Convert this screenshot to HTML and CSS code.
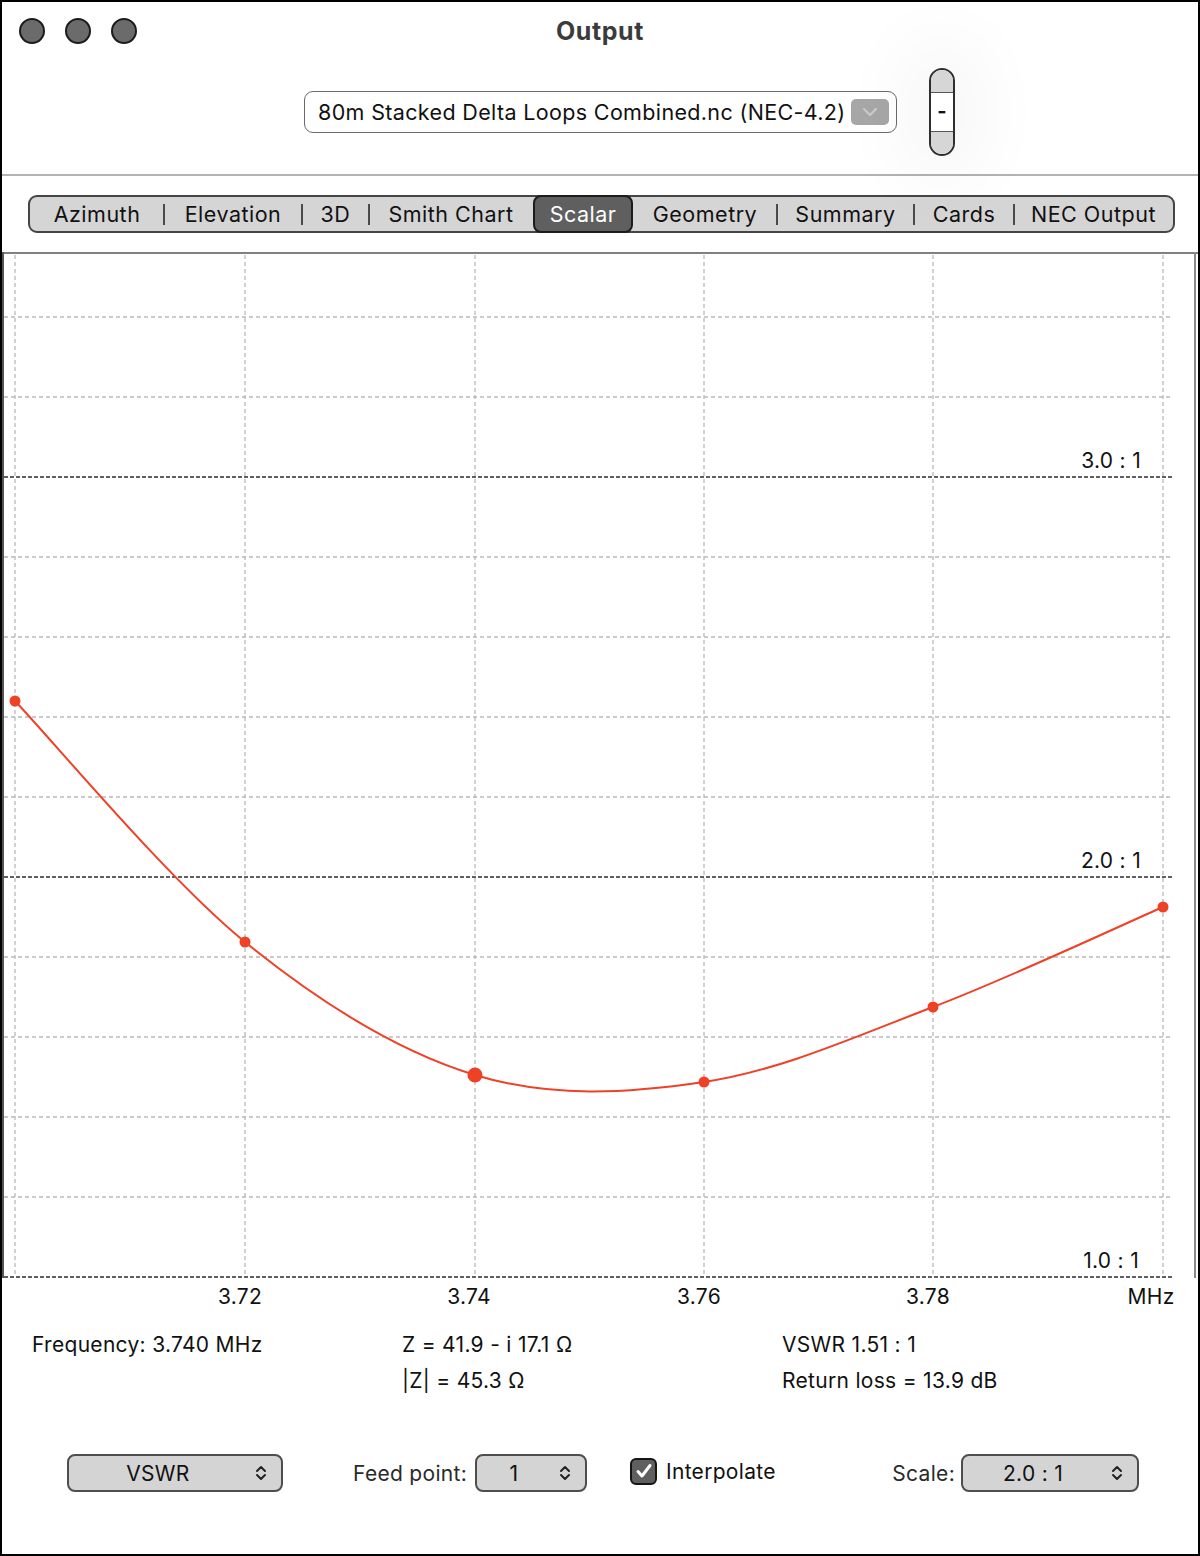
FILE: index.html
```html
<!DOCTYPE html>
<html lang="en">

<head>
    <meta charset="UTF-8">
    <meta name="viewport" content="width=device-width, initial-scale=1.0">
    <title>Output</title>
    <link rel="stylesheet" href="styles.css">
</head>

<body>
    <div class="window">
        <div class="titlebar">
            <div class="lights">
                <span class="light"></span>
                <span class="light"></span>
                <span class="light"></span>
            </div>
            <div class="title">Output</div>
            <div></div>
        </div>

        <div class="toolbar">
            <div></div>
            <div class="filepopup">
                <span class="filename">80m Stacked Delta Loops Combined.nc (NEC-4.2)</span>
                <span class="filearrow">
                    <svg width="18" height="10" viewBox="0 0 18 10"><path d="M3 2 L9 8 L15 2" fill="none" stroke="#c9c9c9" stroke-width="2.4" stroke-linecap="round" stroke-linejoin="round"/></svg>
                </span>
            </div>
            <div class="stepwrap">
                <div class="stepper">
                    <div class="step-top"></div>
                    <div class="step-mid">-</div>
                    <div class="step-bot"></div>
                </div>
            </div>
        </div>

        <div class="tabs">
            <div class="seg w1">Azimuth</div>
            <div class="seg w2">Elevation</div>
            <div class="seg w3">3D</div>
            <div class="seg w4">Smith Chart</div>
            <div class="seg w5 selected">Scalar</div>
            <div class="seg w6 after">Geometry</div>
            <div class="seg w7">Summary</div>
            <div class="seg w8">Cards</div>
            <div class="seg w9">NEC Output</div>
        </div>

        <svg class="chart" width="1196" height="1060" viewBox="2 252 1196 1060">
            <!-- minor grid -->
            <g stroke="#b9b9b9" stroke-width="1.3" stroke-dasharray="4 3" fill="none">
                <line x1="15" y1="255" x2="15" y2="1277"/>
                <line x1="245" y1="255" x2="245" y2="1277"/>
                <line x1="475" y1="255" x2="475" y2="1277"/>
                <line x1="704" y1="255" x2="704" y2="1277"/>
                <line x1="933" y1="255" x2="933" y2="1277"/>
                <line x1="1163" y1="255" x2="1163" y2="1277"/>
                <line x1="4" y1="317" x2="1172" y2="317"/>
                <line x1="4" y1="397" x2="1172" y2="397"/>
                <line x1="4" y1="557" x2="1172" y2="557"/>
                <line x1="4" y1="637" x2="1172" y2="637"/>
                <line x1="4" y1="717" x2="1172" y2="717"/>
                <line x1="4" y1="797" x2="1172" y2="797"/>
                <line x1="4" y1="957" x2="1172" y2="957"/>
                <line x1="4" y1="1037" x2="1172" y2="1037"/>
                <line x1="4" y1="1117" x2="1172" y2="1117"/>
                <line x1="4" y1="1197" x2="1172" y2="1197"/>
            </g>
            <!-- ratio lines -->
            <g stroke="#2c2c2c" stroke-width="1.4" stroke-dasharray="4 2" fill="none">
                <line x1="4" y1="477" x2="1172" y2="477"/>
                <line x1="4" y1="877" x2="1172" y2="877"/>
                <line x1="4" y1="1277" x2="1172" y2="1277"/>
            </g>
            <!-- frame -->
            <line x1="2" y1="253" x2="1198" y2="253" stroke="#808080" stroke-width="2"/>
            <line x1="3" y1="252" x2="3" y2="1278" stroke="#555" stroke-width="2"/>
            <line x1="1195" y1="252" x2="1195" y2="1278" stroke="#8a8a8a" stroke-width="2"/>

            <g class="ratio" text-anchor="end">
                <text x="1141" y="468">3.0 : 1</text>
                <text x="1141" y="868">2.0 : 1</text>
                <text x="1139" y="1268">1.0 : 1</text>
            </g>

            <path d="M15 701 C53.3 741.2 168.3 879.7 245 942 C321.7 1004.3 398.5 1051.7 475 1075 C551.5 1098.3 627.7 1093.3 704 1082 C780.3 1070.7 856.5 1036.2 933 1007 C1009.5 977.8 1124.7 923.7 1163 907" fill="none" stroke="#ee4126" stroke-width="2"/>
            <g fill="#ee4126">
                <circle cx="15" cy="701" r="5.5"/>
                <circle cx="245" cy="942" r="5.5"/>
                <circle cx="475" cy="1075" r="7.5"/>
                <circle cx="704" cy="1082" r="5.5"/>
                <circle cx="933" cy="1007" r="5.5"/>
                <circle cx="1163" cy="907" r="5.5"/>
            </g>

            <g class="axis" text-anchor="middle">
                <text x="240" y="1304">3.72</text>
                <text x="469" y="1304">3.74</text>
                <text x="699" y="1304">3.76</text>
                <text x="928" y="1304">3.78</text>
                <text x="1151" y="1304">MHz</text>
            </g>
        </svg>

        <div class="info">
            <div>Frequency: 3.740 MHz</div>
            <div>Z = 41.9 - i 17.1 Ω</div>
            <div>VSWR 1.51 : 1</div>
            <div></div>
            <div>|Z| = 45.3 Ω</div>
            <div>Return loss = 13.9 dB</div>
        </div>

        <div class="controls">
            <div class="popup vswr">
                <span class="val">VSWR</span>
                <svg class="updown" width="12" height="18" viewBox="0 0 12 18"><path d="M2 7 L6 3 L10 7 M2 11 L6 15 L10 11" fill="none" stroke="#222" stroke-width="2" stroke-linecap="round" stroke-linejoin="round"/></svg>
            </div>
            <label class="lbl feedlbl">Feed point:</label>
            <div class="popup feed">
                <span class="val">1</span>
                <svg class="updown" width="12" height="18" viewBox="0 0 12 18"><path d="M2 7 L6 3 L10 7 M2 11 L6 15 L10 11" fill="none" stroke="#222" stroke-width="2" stroke-linecap="round" stroke-linejoin="round"/></svg>
            </div>
            <div class="check">
                <span class="box">
                    <svg width="20" height="18" viewBox="0 0 20 18"><path d="M4 9.5 L8 14 L16 3.5" fill="none" stroke="#fff" stroke-width="3" stroke-linecap="round" stroke-linejoin="round"/></svg>
                </span>
                <span>Interpolate</span>
            </div>
            <label class="lbl scalelbl">Scale:</label>
            <div class="popup scale">
                <span class="val">2.0 : 1</span>
                <svg class="updown" width="12" height="18" viewBox="0 0 12 18"><path d="M2 7 L6 3 L10 7 M2 11 L6 15 L10 11" fill="none" stroke="#222" stroke-width="2" stroke-linecap="round" stroke-linejoin="round"/></svg>
            </div>
        </div>
    </div>
</body>

</html>
```

FILE: styles.css
```css
body {
    margin: 0;
    background-color: white;
    font-family: Inter, "Noto Sans", sans-serif;
    font-size: 21px;
    letter-spacing: 0.3px;
    color: #111;
}

.window {
    width: 1200px;
    height: 1556px;
    border: 2px solid black;
    box-sizing: border-box;
    overflow: hidden;
}

.titlebar {
    display: grid;
    grid-template-columns: 1fr auto 1fr;
    align-items: center;
    height: 58px;
}

.lights {
    display: flex;
    gap: 20px;
    padding-left: 17px;
}

.light {
    width: 26px;
    height: 26px;
    box-sizing: border-box;
    border-radius: 50%;
    background-color: #6b6b6b;
    border: 2px solid #1c1c1c;
}

.title {
    font-size: 25px;
    font-weight: bold;
    letter-spacing: 0.6px;
    color: #3b3b3b;
}

.toolbar {
    display: grid;
    grid-template-columns: 1fr auto 1fr;
    align-items: center;
    padding: 8px 0 18px;
    border-bottom: 2px solid #b2b2b2;
}

.filepopup {
    display: flex;
    align-items: center;
    justify-content: space-between;
    width: 593px;
    height: 42px;
    box-sizing: border-box;
    padding: 0 7px 0 13px;
    border: 1.5px solid #6a6a6a;
    border-radius: 9px;
    font-size: 21.5px;
    letter-spacing: 0.35px;
    margin-left: 1px;
}

.filearrow {
    display: flex;
    align-items: center;
    justify-content: center;
    width: 38px;
    height: 26px;
    border-radius: 5px;
    background-color: #a7a7a7;
}

.stepwrap {
    padding-left: 32px;
}

.stepper {
    width: 26px;
    height: 88px;
    box-sizing: border-box;
    border: 2px solid #2e2e2e;
    border-radius: 13px;
    overflow: hidden;
    display: flex;
    flex-direction: column;
    box-shadow: 0 0 70px 30px rgba(0, 0, 0, 0.035);
}

.step-top,
.step-bot {
    height: 22px;
    background-color: #d6d6d6;
}

.step-mid {
    flex: 1;
    background-color: white;
    border-top: 1.5px solid #555;
    border-bottom: 1.5px solid #555;
    text-align: center;
    font-size: 20px;
    font-weight: bold;
    line-height: 36px;
}

.tabs {
    display: flex;
    height: 38px;
    box-sizing: border-box;
    margin: 19px 23px 0 26px;
    border: 2px solid #454545;
    border-radius: 9px;
    background-color: #d5d5d5;
}

.seg {
    position: relative;
    display: flex;
    align-items: center;
    justify-content: center;
    font-size: 21.5px;
    letter-spacing: 0.5px;
    color: #111;
}

.seg + .seg::before {
    content: "";
    position: absolute;
    left: -1px;
    top: 7px;
    width: 2px;
    height: 21px;
    background-color: #4a4a4a;
}

.seg.selected::before,
.seg.after::before {
    display: none;
}

.seg.selected {
    margin: -2px 0;
    height: 38px;
    box-sizing: border-box;
    background-color: #5f5f5f;
    border: 2px solid #1c1c1c;
    border-radius: 8px;
    color: white;
}

.w1 { width: 134px; }
.w2 { width: 138px; }
.w3 { width: 67px; }
.w4 { width: 164px; }
.w5 { width: 100px; }
.w6 { width: 144px; }
.w7 { width: 137px; }
.w8 { width: 100px; }
.w9 { width: 159px; }

.chart {
    display: block;
    margin-top: 19px;
}

.chart text {
    font-family: Inter, "Noto Sans", sans-serif;
    font-size: 21px;
    letter-spacing: 0.3px;
    fill: #111;
}

.info {
    display: grid;
    grid-template-columns: 370px 380px 1fr;
    padding: 15px 0 0 30px;
    line-height: 36px;
}

.controls {
    display: flex;
    align-items: center;
    margin-top: 55px;
    padding-left: 65px;
}

.popup {
    display: flex;
    align-items: center;
    height: 38px;
    box-sizing: border-box;
    padding-right: 14px;
    border: 2px solid #4e4e4e;
    border-radius: 8px;
    background-color: #d4d4d4;
}

.popup .val {
    flex: 1;
    text-align: center;
    padding-right: 8px;
}

.vswr { width: 216px; }
.feed { width: 112px; margin-left: 8px; }
.scale { width: 178px; margin-left: 6px; }

.lbl {
    text-align: right;
    color: #2a2a2a;
}

.feedlbl {
    width: 127px;
    margin-left: 57px;
}

.scalelbl {
    width: 85px;
}

.check {
    display: flex;
    align-items: center;
    gap: 9px;
    width: 240px;
    margin-left: 43px;
    margin-top: -4px;
}

.check .box {
    display: flex;
    align-items: center;
    justify-content: center;
    width: 27px;
    height: 27px;
    box-sizing: border-box;
    border: 2px solid #151515;
    border-radius: 6px;
    background-color: #5f5f5f;
}
```
